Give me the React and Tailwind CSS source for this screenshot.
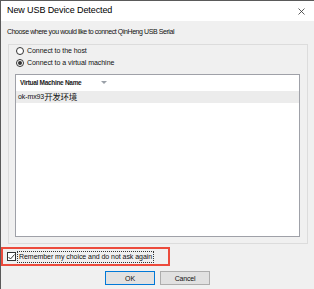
import React from 'react';

const font = { fontFamily: '"Liberation Sans", "Noto Sans CJK SC", sans-serif' };

const Radio = ({ checked, label }) => (
  <div className="flex items-center h-[12px] pl-[7px] gap-[3px]">
    <span className="w-[8px] h-[8px] rounded-full border border-[#333] bg-white flex items-center justify-center">
      {checked && <span className="w-[4px] h-[4px] rounded-full bg-[#333]" />}
    </span>
    <span className="text-[7px] tracking-[-0.05px] text-[#111]">{label}</span>
  </div>
);

export default function App() {
  return (
    <div style={font} className="w-[314px] h-[289px] bg-[#f0f0f0] border-l border-t border-[#5a5a5a] flex flex-col overflow-hidden">
      {/* title bar */}
      <div className="h-[20px] bg-white flex items-center justify-between pl-[6px] pr-[9px] shrink-0">
        <span className="text-[9px] tracking-[-0.1px] text-black">New USB Device Detected</span>
        <svg width="7" height="7" viewBox="0 0 7 7" className="text-[#333]">
          <path d="M0.5 0.5L6.5 6.5M6.5 0.5L0.5 6.5" stroke="currentColor" strokeWidth="0.8" />
        </svg>
      </div>

      <div className="h-[23px] flex items-center pl-[6px] text-[7px] tracking-[-0.42px] text-[#111] shrink-0 whitespace-nowrap">
        Choose where you would like to connect QinHeng USB Serial
      </div>

      {/* group box */}
      <div className="ml-[7px] w-[300px] h-[200px] border border-[#dcdcdc] flex flex-col shrink-0">
        <Radio label="Connect to the host" />
        <Radio checked label="Connect to a virtual machine" />
        <div className="mt-[5px] ml-[6px] w-[285px] h-[163px] bg-white border border-[#9fa1a8] flex flex-col">
          <div className="h-[16px] flex items-center pl-[4px] gap-[20px]">
            <span className="text-[6.5px] text-[#222] font-bold tracking-[-0.3px] whitespace-nowrap">Virtual Machine Name</span>
            <svg width="6" height="4" viewBox="0 0 6 4">
              <path d="M0 0H6L3 3Z" fill="#9aa0a8" />
            </svg>
          </div>
          <div className="h-[12px] bg-[#ececec] flex items-center pl-[2px] text-[7px] tracking-[-0.1px] text-[#111] whitespace-nowrap">
            ok-mx93<span className="text-[8.5px] tracking-[-0.3px]">开发环境</span>
          </div>
        </div>
      </div>

      {/* remember checkbox */}
      <div className="mt-[3px] w-[169px] h-[19px] border-2 border-[#ec4b3c] flex items-center pl-[4px] gap-[1px] shrink-0">
        <span className="w-[9px] h-[9px] border border-[#333] bg-white flex items-center justify-center">
          <svg width="7" height="6" viewBox="0 0 7 6">
            <path d="M0.5 3L2.5 5L6.5 0.5" stroke="#222" strokeWidth="0.9" fill="none" />
          </svg>
        </span>
        <span className="text-[7px] tracking-[-0.05px] text-[#111] border border-dotted border-[#333] px-[1px] leading-[10px] whitespace-nowrap">
          Remember my choice and do not ask again
        </span>
      </div>

      {/* buttons */}
      <div className="mt-[5px] flex gap-[5px] pl-[104px]">
        <button className="w-[50px] h-[14px] bg-[#e1e1e1] border border-[#0078d7] text-[7px] text-[#111] leading-none">OK</button>
        <button className="w-[50px] h-[14px] bg-[#e1e1e1] border border-[#adadad] text-[7px] tracking-[-0.2px] text-[#111] leading-none">Cancel</button>
      </div>
    </div>
  );
}
